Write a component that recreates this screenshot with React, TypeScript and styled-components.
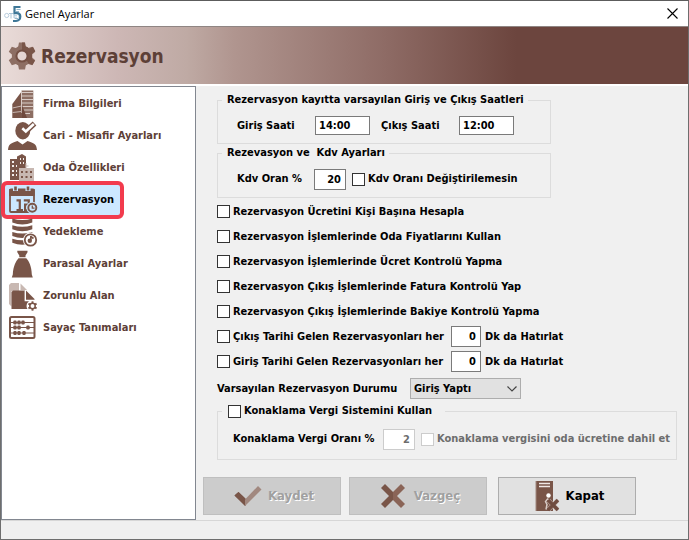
import React, { useState } from "react";
import styled, { createGlobalStyle } from "styled-components";

const GlobalStyle = createGlobalStyle`
  * { box-sizing: border-box; }
  body {
    margin: 0;
    background: #f0f0f0;
    color: #000;
    font: bold 11px/16px "DejaVu Sans Condensed", "DejaVu Sans", "Noto Sans", sans-serif;
  }
  input, select, button { font: inherit; color: inherit; margin: 0; }
  svg { flex: none; }
`;

const BROWN = "#795548";
const PALE = "#c8b8b2";

const Window = styled.div`
  min-height: 100vh;
  display: flex;
  flex-direction: column;
  border: 1px solid #6e6e6e;
  border-top-color: #5c5c5c;
`;

const TitleBar = styled.div`
  height: 25px;
  display: flex;
  align-items: center;
  gap: 3px;
  padding: 0 8px 0 3px;
  background: #fff;
`;

const WindowTitle = styled.div`
  flex: 1;
  font: 11px/16px "Open Sans", "Noto Sans", sans-serif;
`;

const CloseButton = styled.button`
  display: flex;
  padding: 2px;
  border: 0;
  background: none;
`;

const Header = styled.header`
  height: 60px;
  display: flex;
  align-items: center;
  gap: 5px;
  padding: 0 7px;
  border-top: 1px solid #8f8583;
  border-bottom: 2px solid #fff;
  background: linear-gradient(90deg, #e9dbd8 0%, #cdb7b5 17%, #bfaaa4 27%, #b0958f 34%, #8e6b65 56%, #6c453e 75%);
`;

const PageTitle = styled.h1`
  margin: 0;
  font-size: 19px;
  line-height: 24px;
  color: #5d4037;
`;

const Body = styled.div`
  flex: 1;
  display: flex;
`;

const Sidebar = styled.nav`
  flex: 0 0 195px;
  padding: 1px 0;
  border: 1px solid #828790;
  background: #fff;
`;

const NavItem = styled.button<{ $active?: boolean }>`
  position: relative;
  width: ${(p) => (p.$active ? "118px" : "100%")};
  height: 32px;
  display: flex;
  align-items: center;
  gap: 5px;
  padding: 0 0 0 6px;
  border: 0;
  text-align: left;
  white-space: nowrap;
  color: ${(p) => (p.$active ? "#000" : "#5d4037")};
  background: ${(p) => (p.$active ? "#cce8ff" : "none")};
`;

const Highlight = styled.span`
  position: absolute;
  inset: -3px -4px -3px -1px;
  border: 4px solid #f23b4d;
  border-radius: 6px;
`;

const Main = styled.main`
  flex: 1;
  display: flex;
  flex-direction: column;
  padding: 6px 11px 5px 7px;
`;

const Form = styled.div`
  padding-left: 14px;
  display: flex;
  flex-direction: column;
`;

const Group = styled.fieldset<{ $narrow?: boolean }>`
  margin: 0 0 1px;
  width: 100%;
  max-width: ${(p) => (p.$narrow ? "334px" : "460px")};
  padding: 0 4px;
  border: 1px solid #dcdcdc;
  min-width: 0;
`;

const Legend = styled.legend<{ $wide?: boolean }>`
  display: flex;
  align-items: center;
  padding: ${(p) => (p.$wide ? "0 13px 0 6px" : "0 4px 0 5px")};
  white-space: pre;
`;

const Row = styled.div<{ $indent?: number; $height: number; $gap?: number }>`
  min-height: ${(p) => p.$height}px;
  display: flex;
  align-items: center;
  gap: ${(p) => p.$gap ?? 4}px;
  padding-left: ${(p) => p.$indent ?? 0}px;
`;

const Label = styled.label<{ $width?: number; $dim?: boolean }>`
  flex: ${(p) => (p.$width ? `0 0 ${p.$width}px` : "none")};
  white-space: nowrap;
  color: ${(p) => (p.$dim ? "#6d6d6d" : "inherit")};
`;

const CheckLabel = styled(Label)`
  display: flex;
  align-items: center;
  gap: 3px;
`;

const Tick = styled.input.attrs({ type: "checkbox" })`
  appearance: none;
  flex: none;
  width: 13px;
  height: 13px;
  border: 1px solid #333;
  background: #fff;
  &:checked { background: ${BROWN}; box-shadow: inset 0 0 0 2px #fff; }
  &:disabled { border-color: #ccc; }
`;

const Field = styled.input<{ $width: number; $time?: boolean }>`
  width: ${(p) => p.$width}px;
  height: ${(p) => (p.$time ? 19 : 21)}px;
  padding: ${(p) => (p.$time ? "0 2px 0 3px" : "0 4px 0 2px")};
  text-align: ${(p) => (p.$time ? "left" : "right")};
  border: 1px solid #7a7a7a;
  background: #fff;
  &:disabled { border-color: #ccc; color: #6d6d6d; }
`;

const SelectBox = styled.span`
  position: relative;
  display: flex;
`;

const Select = styled.select`
  appearance: none;
  width: 111px;
  height: 21px;
  padding: 0 20px 0 3px;
  border: 1px solid #adadad;
  border-radius: 0;
  background: #e1e1e1;
`;

const Arrow = styled.svg`
  position: absolute;
  right: 3px;
  top: 7px;
  pointer-events: none;
`;

const Actions = styled.div`
  display: flex;
  margin-top: auto;
`;

const ActionButton = styled.button<{ $gap?: number }>`
  flex: 0 1 138px;
  height: 38px;
  margin-right: 8px;
  display: flex;
  align-items: center;
  justify-content: center;
  gap: ${(p) => p.$gap ?? 6}px;
  padding: 0 4px 0 8px;
  border: 1px solid #adadad;
  background: #e1e1e1;
  font-size: 13px;
  &:disabled {
    border-color: #bfbfbf;
    background: #ccc;
    color: #a0a0a0;
    text-shadow: 1px 1px 0 #fff;
  }
  &:last-child { margin-left: 3px; }
`;

const StatusBar = styled.footer`
  height: 19px;
  border-top: 1px solid #d7d7d7;
`;

const Logo = () => (
  <svg width="18" height="18" viewBox="0 0 18 18" aria-hidden="true" fill="none">
    <circle cx="2.7" cy="10.5" r="2.1" stroke="#b9cddd" />
    <path d="M5 8.5h4M7 8.5v5M13.5 8.5H10v4.5h3M10 10.8h3M15 8v5" stroke="#a9c5d8" />
    <path d="M16.500 2H10.500V8.200h2.200c2.500 0 3.600 1.200 3.600 3.400S14.800 16 12 16H9" stroke="#3e7797" strokeWidth="2.200" />
    <path d="M12.500 4.500h4M12 6.500h3M11 13.500h3" stroke="#94b7ca" />
  </svg>
);

const teeth = [0, 60, 120, 180, 240, 300];

const Gear = () => (
  <svg width="28" height="28" viewBox="0 0 28 28" aria-hidden="true">
    <g fill="#8d6e63">
      {teeth.map((a) => (
        <path key={a} d="M10 5.500L11 .5h6l1 5z" transform={`rotate(${a} 14 14)`} />
      ))}
      <path fillRule="evenodd" d="M14 3.800a10.200 10.200 0 1 0 0 20.400a10.200 10.200 0 0 0 0-20.400zM14 9a5 5 0 1 1 0 10a5 5 0 0 1 0-10z" />
    </g>
    <path d="M14 3.800a10.200 10.200 0 0 1 7 17.600l-3.400-3.800A5 5 0 0 0 14 9z" fill={BROWN} />
    <path d="M14 .5h2.800l.7 4.500-3.500 1zM21 7l4-2.200 2.300 4.500-4 3zM22 16l5 2.500-2.500 4.500-4.500-2z" fill={BROWN} />
    <circle cx="14" cy="14" r="5.600" fill="none" stroke="#745044" strokeWidth="2" />
  </svg>
);

const Building = () => (
  <svg width="30" height="30" viewBox="0 0 30 30" aria-hidden="true">
    <path d="M4.300 15L14 2v27H4.300z" fill={BROWN} />
    <path d="M13.500 1.500h11.800V29H13.500z" fill="#8d6e63" />
    <path d="M14 3.500h11M14 7h11M14 10.500h11M14 14h11M14 17.500h11M14 21h11M14 24.500h8" stroke="#d8cbc6" strokeWidth="1.200" />
    <path d="M4.500 19l9-2M4.500 23.500l9-1" stroke="#c8b8b2" strokeWidth="1" />
    <path d="M13.500 2v22" stroke="#d8cbc6" />
    <path d="M14 16l5 13h-5.500z" fill="#6f493d" />
  </svg>
);

const Person = () => (
  <svg width="30" height="30" viewBox="0 0 30 30" aria-hidden="true">
    <ellipse cx="14.800" cy="9.700" rx="7.500" ry="8.700" fill={BROWN} />
    <path d="M14 7l3.800 3.500L26.500 2.500" fill="none" stroke={BROWN} strokeWidth="5.500" />
    <path d="M14.300 7.300l3.500 3.200 8-7.500" fill="none" stroke="#fff" strokeWidth="2.600" />
    <path d="M0 29c.5-6 3-7 9.500-9l5 3.500 5-3.500c6.500 2 9 3 9.500 9z" fill={BROWN} />
  </svg>
);

const City = () => (
  <svg width="30" height="30" viewBox="0 0 30 30" aria-hidden="true">
    <path d="M2 6h7V3.500L14 1l4 2.500V15h-7v12H2z" fill={BROWN} />
    <path d="M11 15h15v13H11z" fill={PALE} />
    <path d="M18 10v5M17.500 13h3" stroke={PALE} />
    <path d="M4 9h2M12 6h1M15 6h1M12 10h1M15 10h1M4 13h2M8 13h1M4 18h2M8 18h1M4 22h2M8 22h1" stroke="#f3edea" strokeWidth="2" />
    <path d="M13 19h2M17.500 19h2M22 19h2M13 24h2M17.500 24h2M22 24h2" stroke={BROWN} strokeWidth="2" />
  </svg>
);

const Calendar = () => (
  <svg width="30" height="30" viewBox="0 0 30 30" aria-hidden="true" fill="none" stroke={BROWN}>
    <rect x="2" y="4.500" width="24" height="22.500" rx="1" strokeWidth="1.800" />
    <path d="M1.200 4h25.500v7H1.200z" fill={BROWN} stroke="none" />
    <path d="M7.500 1v5M20 1v5" stroke="#cce8ff" strokeWidth="5" />
    <path d="M7.500 1.500v4M20 1.500v4" strokeWidth="2.600" />
    <path d="M8.500 15.300h3.300V25M8.500 25H15M15.800 15.300h5v4.200h-3.700V25h4" strokeWidth="2.200" />
    <circle cx="24.300" cy="22.700" r="6" fill="#cce8ff" stroke="none" />
    <circle cx="24.300" cy="22.700" r="4" fill="#cce8ff" strokeWidth="1.900" />
    <path d="M24.300 20.500v2.700h2.200" strokeWidth="1.300" />
  </svg>
);

const Database = () => (
  <svg width="30" height="30" viewBox="0 0 30 30" aria-hidden="true" fill="none" stroke={BROWN}>
    {[3, 9.7, 16.4, 23.2].map((y) => (
      <path key={y} d={`M4.300 ${y - 1.5}q10 3 20 0v4q-10 4-20 0z`} fill={BROWN} stroke="none" />
    ))}
    <circle cx="22.500" cy="23" r="7.500" fill="#fff" stroke="none" />
    <circle cx="22.500" cy="23" r="5.700" fill="#fff" strokeWidth="1.800" />
    <path d="M22.800 19v4.500M22.800 19.500l2.700 2" strokeWidth="1.600" />
    <circle cx="21.800" cy="23.800" r="2.200" fill={BROWN} stroke="none" />
  </svg>
);

const MoneyBag = () => (
  <svg width="30" height="30" viewBox="0 0 30 30" aria-hidden="true" fill={BROWN}>
    <path d="M9.300 1.700h10.200v1.500L17.500 6.500v1.700h-6.200V6.500L9.300 3.200zM10.500 9.200h7.800C21 12 23.500 17 23.800 25.500l1 3h-21l1-3C5.200 17 8 12 10.500 9.200z" />
  </svg>
);

const Pages = () => (
  <svg width="30" height="30" viewBox="0 0 30 30" aria-hidden="true">
    <path d="M3 2h8v8H3.500v15.500L1 23V4z" fill={PALE} />
    <path d="M12.500 2.500L19 9h-6.500z" fill={PALE} />
    <path d="M5 9.500h12v9.500l9 2V28H3.500V11z" fill={BROWN} />
    <path d="M18 9.500L26.500 18v1H18z" fill={BROWN} />
    <path d="M17.300 9.500v10h9.500" fill="none" stroke="#fff" strokeWidth="1.400" />
    <circle cx="24.500" cy="25" r="6" fill="#fff" />
    <circle cx="24.500" cy="25" r="2.700" fill="#fff" stroke={BROWN} strokeWidth="1.500" />
    {teeth.map((a) => (
      <path key={a} d="M24.500 20.300v2.200" stroke={BROWN} strokeWidth="1.900" transform={`rotate(${a} 24.500 25)`} />
    ))}
  </svg>
);

const Abacus = () => (
  <svg width="30" height="30" viewBox="0 0 30 30" aria-hidden="true">
    <rect x="2" y="4" width="24.500" height="21" rx="1.500" fill="#fff" stroke={BROWN} strokeWidth="2" />
    <path d="M2 9.500h25M2 14.500h25M2 20h25" stroke={BROWN} />
    <g fill={BROWN}>
      {[[7, 9.5], [11, 9.5], [15, 9.5], [7, 14.5], [11, 14.5], [20, 14.5], [7, 20], [11, 20], [16, 20]].map(([x, y]) => (
        <rect key={`${x}-${y}`} x={x - 1.7} y={y - 2} width="3.400" height="4" rx="1.200" />
      ))}
    </g>
  </svg>
);

const CheckIcon = () => (
  <svg width="28" height="22" viewBox="0 0 28 22" aria-hidden="true">
    <path d="M.5 10.500L4.500 7l7.500 7v7z" fill={BROWN} />
    <path d="M11 14.500L24 1l3.500 3.500L11 21z" fill="#a1887f" />
    <path d="M.5 10.500L4.500 7l6.500 6.500V21z" fill={BROWN} />
  </svg>
);

const CrossIcon = () => (
  <svg width="26" height="26" viewBox="0 0 26 26" aria-hidden="true">
    <path d="M13 9L21 1l4 4-8 8 8 8-4 4-8-8z" fill="#8a6457" />
    <path d="M13 9L5 1 1 5l8 8-8 8 4 4 8-8z" fill={BROWN} />
  </svg>
);

const ExitIcon = () => (
  <svg width="26" height="32" viewBox="0 0 26 32" aria-hidden="true">
    <path d="M2 1h17v30H2z" fill={BROWN} />
    <path d="M2 1v30" stroke="#a1887f" />
    <path d="M5 3.500h11M5 6.500h11" stroke="#f0e8e5" strokeWidth="1.500" />
    <circle cx="14.500" cy="15.500" r="2.200" fill="#fff" />
    <path d="M14 18.500l-2.500 3 1.500 3-1 5M14 19l3 3" stroke="#d9ccc7" strokeWidth="1.500" fill="none" />
    <path d="M14.500 20.500l9 9M23.500 20.500l-9 9" stroke="#c8b8b2" strokeWidth="4.500" />
    <path d="M14 20l10 10M24 20L14 30" stroke="#704c40" strokeWidth="3.500" />
  </svg>
);

const navItems = [
  { text: "Firma Bilgileri", Icon: Building },
  { text: "Cari - Misafir Ayarları", Icon: Person },
  { text: "Oda Özellikleri", Icon: City },
  { text: "Rezervasyon", Icon: Calendar },
  { text: "Yedekleme", Icon: Database },
  { text: "Parasal Ayarlar", Icon: MoneyBag },
  { text: "Zorunlu Alan", Icon: Pages },
  { text: "Sayaç Tanımaları", Icon: Abacus },
];

const options = [
  "Rezervasyon Ücretini Kişi Başına Hesapla",
  "Rezervasyon İşlemlerinde Oda Fiyatlarını Kullan",
  "Rezervasyon İşlemlerinde Ücret Kontrolü Yapma",
  "Rezervasyon Çıkış İşlemlerinde Fatura Kontrolü Yap",
  "Rezervasyon Çıkış İşlemlerinde Bakiye Kontrolü Yapma",
];

const reminders = [
  { id: "out", text: "Çıkış Tarihi Gelen Rezervasyonları her" },
  { id: "in", text: "Giriş Tarihi Gelen Rezervasyonları her" },
];

export default function App() {
  const [active, setActive] = useState("Rezervasyon");
  return (
    <>
      <GlobalStyle />
      <Window>
        <TitleBar>
          <Logo />
          <WindowTitle>Genel Ayarlar</WindowTitle>
          <CloseButton aria-label="Kapat">
            <svg width="11" height="11" viewBox="0 0 11 11" aria-hidden="true">
              <path d="M.5.5l10 10M10.500.5l-10 10" stroke="#000" strokeWidth="1.100" />
            </svg>
          </CloseButton>
        </TitleBar>
        <Header>
          <Gear />
          <PageTitle>Rezervasyon</PageTitle>
        </Header>
        <Body>
          <Sidebar>
            {navItems.map(({ text, Icon }) => (
              <NavItem key={text} $active={text === active} onClick={() => setActive(text)}>
                <Icon />
                {text}
                {text === active && <Highlight />}
              </NavItem>
            ))}
          </Sidebar>
          <Main>
            <Form>
              <Group $narrow>
                <Legend>Rezervasyon kayıtta varsayılan Giriş ve Çıkış Saatleri</Legend>
                <Row $height={35} $indent={15} $gap={0}>
                  <Label htmlFor="checkin" $width={78}>Giriş Saati</Label>
                  <Field id="checkin" $width={55} $time defaultValue="14:00" />
                  <Row as="span" $height={19} $indent={11} $gap={0}>
                    <Label htmlFor="checkout" $width={78}>Çıkış Saati</Label>
                    <Field id="checkout" $width={55} $time defaultValue="12:00" />
                  </Row>
                </Row>
              </Group>
              <Group $narrow>
                <Legend>{"Rezevasyon ve  Kdv Ayarları"}</Legend>
                <Row $height={36} $indent={15} $gap={0}>
                  <Label htmlFor="kdv" $width={77}>Kdv Oran %</Label>
                  <Field id="kdv" $width={32} defaultValue="20" />
                  <Row as="span" $height={21} $indent={6}>
                    <CheckLabel><Tick />Kdv Oranı Değiştirilemesin</CheckLabel>
                  </Row>
                </Row>
              </Group>
              {options.map((text) => (
                <Row key={text} $height={25}>
                  <CheckLabel><Tick />{text}</CheckLabel>
                </Row>
              ))}
              {reminders.map(({ id, text }) => (
                <Row key={id} $height={25}>
                  <CheckLabel $width={230}><Tick />{text}</CheckLabel>
                  <Field id={id} $width={30} defaultValue="0" aria-label={text} />
                  <Label htmlFor={id}>Dk da Hatırlat</Label>
                </Row>
              ))}
              <Row $height={29} $gap={0}>
                <Label htmlFor="status" $width={193}>Varsayılan Rezervasyon Durumu</Label>
                <SelectBox>
                  <Select id="status"><option>Giriş Yaptı</option></Select>
                  <Arrow width="12" height="8" viewBox="0 0 12 8" aria-hidden="true">
                    <path d="M1.500 1.500L6 6l4.500-4.500" fill="none" stroke="#444" strokeWidth="1.200" />
                  </Arrow>
                </SelectBox>
              </Row>
              <Group>
                <Legend $wide>
                  <CheckLabel><Tick />Konaklama Vergi Sistemini Kullan</CheckLabel>
                </Legend>
                <Row $height={40} $indent={11} $gap={0}>
                  <Label htmlFor="tax" $width={150}>Konaklama Vergi Oranı %</Label>
                  <Field id="tax" $width={32} defaultValue="2" disabled />
                  <Row as="span" $height={21} $indent={6}>
                    <CheckLabel $dim><Tick disabled />Konaklama vergisini oda ücretine dahil et</CheckLabel>
                  </Row>
                </Row>
              </Group>
            </Form>
            <Actions>
              <ActionButton disabled><CheckIcon />Kaydet</ActionButton>
              <ActionButton disabled $gap={8}><CrossIcon />Vazgeç</ActionButton>
              <ActionButton><ExitIcon />Kapat</ActionButton>
            </Actions>
          </Main>
        </Body>
        <StatusBar />
      </Window>
    </>
  );
}
